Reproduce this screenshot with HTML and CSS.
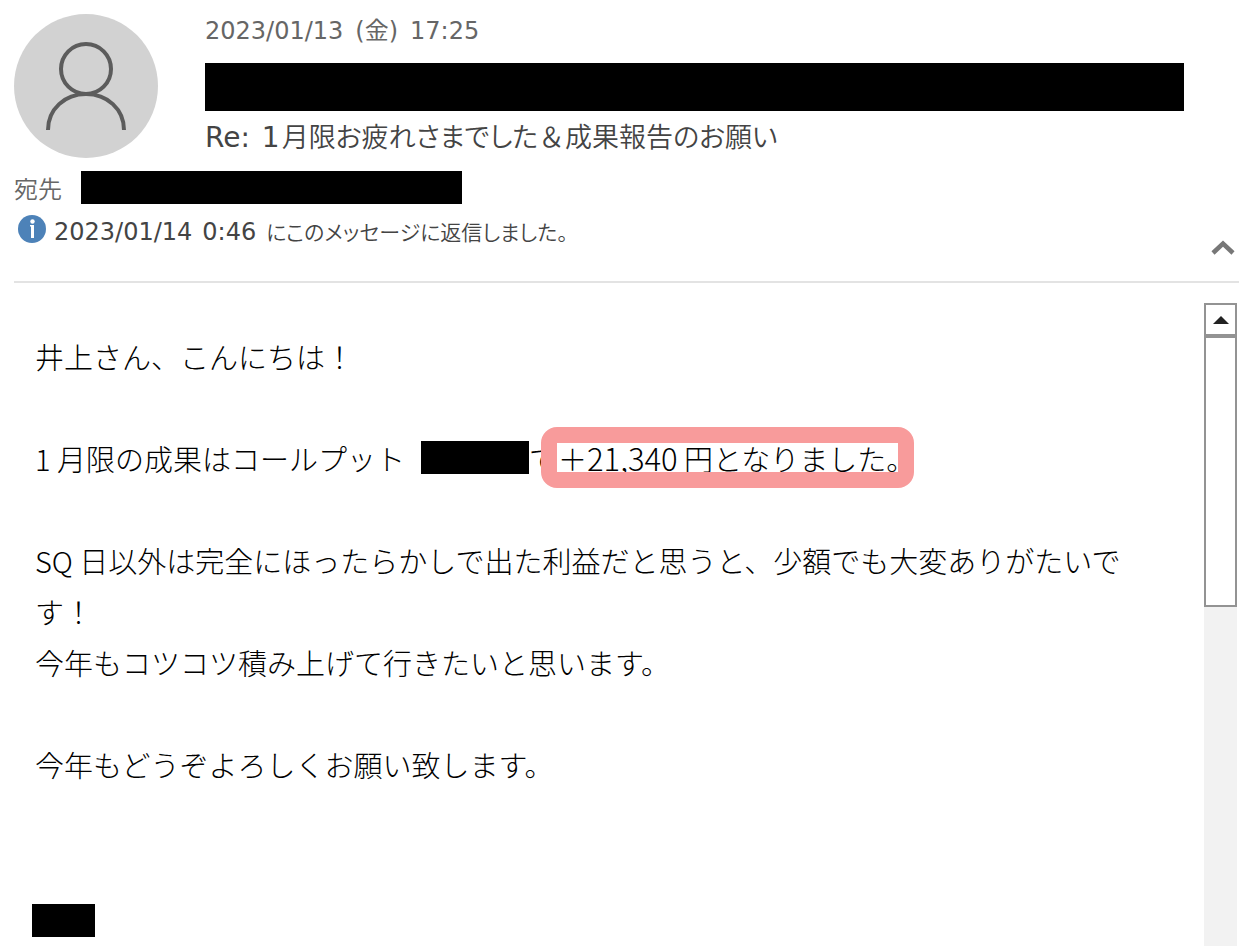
FILE: index.html
```html
<!DOCTYPE html>
<html lang="ja">
<head>
<meta charset="utf-8">
<meta name="viewport" content="width=device-width, initial-scale=1">
<title>Re: 1月限お疲れさまでした＆成果報告のお願い</title>
<link rel="stylesheet" href="styles.css">
</head>
<body>
<main class="message">
  <header class="message-header">
    <div class="sender">
      <svg class="avatar" viewBox="0 0 144 144" aria-hidden="true">
        <circle cx="72" cy="72" r="72" fill="#d2d2d2"/>
        <g fill="none" stroke="#5c5c5c" stroke-width="4">
          <circle cx="72" cy="55" r="25"/>
          <path d="M34 116C34 95 51 80 72 80S110 95 110 116"/>
        </g>
      </svg>
      <div class="sender-info">
        <time class="date"><span>2023/01/13</span> <span>(金)</span> <span>17:25</span></time>
        <div class="redacted redacted-sender"></div>
        <h1 class="subject"><span>Re:</span> <span>1<span class="subject-ja">月限お疲れさまでした<span class="wide">＆</span>成果報告のお願い</span></span></h1>
      </div>
    </div>
    <div class="recipient">
      <span class="recipient-label">宛先</span>
      <span class="redacted redacted-recipient"></span>
    </div>
    <div class="notice">
      <svg class="info-icon" viewBox="0 0 28 28" aria-hidden="true">
        <circle cx="14" cy="14" r="14" fill="#4d82b8"/>
        <circle cx="14.500" cy="6.500" r="2.200" fill="#fff"/>
        <path d="M12 10h4v13h-3V11.500h-1z" fill="#fff"/>
      </svg>
      <div class="notice-text"><span>2023/01/14</span> <span>0:46</span> <span class="kana">にこのメッセージに返信しました。</span></div>
      <button class="collapse" type="button" aria-label="ヘッダーを折りたたむ">
        <svg class="chevron" viewBox="0 0 24 15" aria-hidden="true"><path d="M2 13L12 3.500L22 13" fill="none" stroke="#777" stroke-width="4.500"/></svg>
      </button>
    </div>
  </header>
  <section class="content">
    <article class="text">
      <p>井上さん、こんにちは！</p>
      <p>1 月限の成果はコールプット<span class="redacted redacted-amount"></span>で<span class="highlight">＋<span class="amount">21,340</span> 円となりました。</span></p>
      <p>SQ 日以外は完全にほったらかしで出た利益だと思うと、少額でも大変ありがたいです！<br>今年もコツコツ積み上げて行きたいと思います。</p>
      <p>今年もどうぞよろしくお願い致します。</p>
      <div class="redacted redacted-signature"></div>
    </article>
    <div class="scrollbar">
      <button class="scroll-up" type="button" aria-label="上へスクロール">
        <svg class="arrow" viewBox="0 0 16 8" aria-hidden="true"><path d="M0 8L8 0L16 8z" fill="#222"/></svg>
      </button>
      <div class="scroll-thumb"></div>
    </div>
  </section>
</main>
</body>
</html>
```
FILE: styles.css
```css
* { box-sizing: border-box; }
body {
  margin: 0;
  background: #fff;
  color: #000;
  font-family: "DejaVu Sans", "Noto Sans CJK JP", sans-serif;
}
button { margin: 0; padding: 0; border: 0; background: none; }
svg { display: block; }
.message {
  display: flex;
  flex-direction: column;
  min-height: 100vh;
  padding-left: 14px;
}
.message-header {
  margin-right: 5px;
  padding-top: 14px;
  border-bottom: 2px solid #e3e3e3;
  color: #444;
  font-size: 24px;
  line-height: 32px;
}
.redacted { background: #000; }
.sender { display: flex; gap: 47px; }
.avatar { flex: none; width: 144px; height: 144px; }
.sender-info { flex: 1; min-width: 0; padding-right: 55px; }
.date { display: flex; align-items: baseline; gap: 12px; height: 34px; color: #666; line-height: 34px; }
.redacted-sender { height: 48px; margin-top: 15px; }
.subject {
  display: flex;
  align-items: baseline;
  gap: 12px;
  height: 36px;
  margin: 8px 0 0;
  font-size: 28px;
  font-weight: 400;
  line-height: 34px;
}
.subject-ja {
  margin-left: 2px;
  font-family: "Noto Sans CJK JP", sans-serif;
  font-size: 27px;
  font-weight: 350;
  font-feature-settings: "palt";
}
.wide { font-feature-settings: normal; }
.recipient {
  display: flex;
  align-items: center;
  gap: 19px;
  margin-top: 13px;
  color: #666;
}
.recipient-label {
  font-family: "Noto Sans CJK JP", sans-serif;
  font-weight: 350;
  line-height: 33px;
}
.redacted-recipient { width: 381px; height: 33px; }
.notice { display: flex; align-items: flex-start; gap: 8px; padding: 11px 4px 26px; }
.info-icon { flex: none; width: 28px; height: 28px; }
.notice-text { display: flex; flex: 1; align-items: baseline; gap: 10px; line-height: 32px; }
.kana {
  font-family: "Noto Sans CJK JP", sans-serif;
  font-size: 21px;
  font-feature-settings: "palt";
  font-weight: 350;
}
.collapse { margin-top: 25px; }
.chevron { width: 24px; height: 15px; }
.content {
  display: flex;
  flex: 1;
  gap: 24px;
  padding: 20px 7px 0 0;
}
.text {
  flex: 1;
  min-width: 0;
  padding: 28px 24px 8px 21px;
  font-family: "Noto Sans CJK JP", sans-serif;
  font-size: 29px;
  font-weight: 300;
  line-height: 51px;
}
.text p { margin: 0 0 51px; }
.redacted-amount {
  display: inline-block;
  width: 108px;
  height: 33px;
  margin-left: 16px;
  vertical-align: -3px;
}
.highlight { position: relative; }
.amount { font-size: 31px; line-height: 1; }
.highlight::after {
  content: "";
  position: absolute;
  inset: -10px 1px -9px -17px;
  border: 16px solid #f89b9b;
  border-radius: 16px;
}
.redacted-signature { width: 63px; height: 33px; margin: 114px 0 0 -3px; }
.scrollbar { flex: none; width: 33px; background: #f2f2f2; }
.scroll-up {
  display: grid;
  place-items: center;
  width: 33px;
  height: 33px;
  border: 2px solid #939393;
  background: #fff;
}
.arrow { width: 16px; height: 8px; }
.scroll-thumb { height: 271px; border: 2px solid #939393; background: #fff; }
```
